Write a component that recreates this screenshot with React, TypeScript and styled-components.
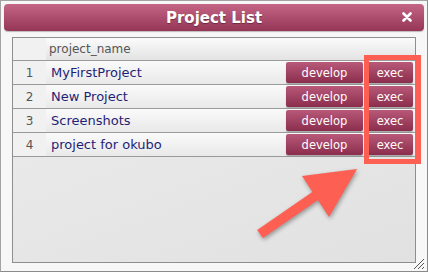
import styled, { createGlobalStyle } from 'styled-components';

const projects = ['MyFirstProject', 'New Project', 'Screenshots', 'project for okubo'];

const GlobalStyle = createGlobalStyle`
  html, body {
    margin: 0;
    padding: 0;
    background: #ffffff;
  }
  * {
    box-sizing: border-box;
  }
`;

export default function App() {
  return (
    <>
      <GlobalStyle />
      <Dialog>
        <TitleBar>
          <span />
          <Title>Project List</Title>
          <CloseButton aria-label='close'>
            <svg width='10' height='10' viewBox='0 0 10 10'>
              <path d='M1.5 1.5 L8.5 8.5 M8.5 1.5 L1.5 8.5' stroke='#fff' strokeWidth='2.6' strokeLinecap='round' />
            </svg>
          </CloseButton>
        </TitleBar>
        <Grid>
          <HeaderRow>
            <NumCell />
            <HeaderLabel>project_name</HeaderLabel>
          </HeaderRow>
          {projects.map((name, i) => (
            <Row key={name}>
              <NumCell>{i + 1}</NumCell>
              <NameCell>
                <Name>{name}</Name>
                <Actions>
                  <ActionButton $width={77}>develop</ActionButton>
                  <ActionButton $width={46}>exec</ActionButton>
                </Actions>
              </NameCell>
            </Row>
          ))}
        </Grid>
        <Highlight />
        <Arrow width='428' height='273' viewBox='0 0 428 273'>
          <line x1='260' y1='234' x2='318' y2='194' stroke='#fd5f52' strokeWidth='10' />
          <polygon points='302,176 357,169 329,217' fill='#fd5f52' />
        </Arrow>
        <Grip width='12' height='12' viewBox='0 0 12 12'>
          <path d='M1 11 L11 1 M5 11 L11 5 M9 11 L11 9' stroke='#555' strokeWidth='1' />
        </Grip>
      </Dialog>
    </>
  );
}

const Dialog = styled.div`
  position: relative;
  width: 428px;
  height: 272px;
  padding: 3px;
  border: 1px solid #a3a3a3;
  border-right-color: #8a8a8a;
  border-bottom-color: #8a8a8a;
  background: #f7f7f7;
  font-family: 'DejaVu Sans', Verdana, sans-serif;
`;

const TitleBar = styled.div`
  display: grid;
  grid-template-columns: 1fr auto 1fr;
  align-items: center;
  height: 27px;
  border-radius: 4px;
  background: linear-gradient(#c46585, #963657);
  box-shadow: 0 1px 1px rgba(0, 0, 0, 0.25);
`;

const Title = styled.div`
  color: #fff;
  font-size: 15px;
  font-weight: bold;
  text-shadow: 0 1px 1px rgba(0, 0, 0, 0.35);
`;

const CloseButton = styled.div`
  justify-self: end;
  display: flex;
  margin-right: 12px;
  margin-top: -1px;
`;

const Grid = styled.div`
  margin: 6px 8px 0 8px;
  height: 226px;
  border: 1px solid #8e8e8e;
  background: linear-gradient(160deg, #ededed, #e1e1e1);
`;

const HeaderRow = styled.div`
  display: flex;
  height: 23px;
  border-bottom: 1px solid #9a9a9a;
  background: linear-gradient(#fbfbfb, #e3e3e3);
`;

const HeaderLabel = styled.div`
  display: flex;
  align-items: center;
  padding-left: 3px;
  color: #555;
  font-size: 12px;
`;

const Row = styled.div`
  display: flex;
  height: 24px;
  border-bottom: 1px solid #9a9a9a;
`;

const NumCell = styled.div`
  display: flex;
  align-items: center;
  justify-content: center;
  width: 33px;
  flex: none;
  color: #555;
  font-size: 12px;
  background: #f1f1f1;
`;

const NameCell = styled.div`
  display: flex;
  align-items: center;
  flex: 1;
  padding: 0 2px 0 5px;
  background: linear-gradient(#fafafa, #e9e9e9);
`;

const Name = styled.div`
  flex: 1;
  color: #1f1f78;
  font-size: 13px;
`;

const Actions = styled.div`
  display: flex;
  gap: 4px;
`;

const ActionButton = styled.div<{ $width: number }>`
  display: flex;
  align-items: center;
  justify-content: center;
  width: ${(p) => p.$width}px;
  height: 21px;
  border-radius: 2px;
  background: linear-gradient(#b85979, #8b2d4d);
  box-shadow: 0 1px 1px rgba(0, 0, 0, 0.3);
  color: #fff;
  font-size: 11.5px;
`;

const Highlight = styled.div`
  position: absolute;
  left: 363px;
  top: 54px;
  width: 57px;
  height: 109px;
  border: 5px solid #fd5f52;
`;

const Arrow = styled.svg`
  position: absolute;
  left: -1px;
  top: -1px;
  pointer-events: none;
  filter: drop-shadow(1px 2px 2px rgba(0, 0, 0, 0.35));
`;

const Grip = styled.svg`
  position: absolute;
  right: 2px;
  bottom: 1px;
`;
